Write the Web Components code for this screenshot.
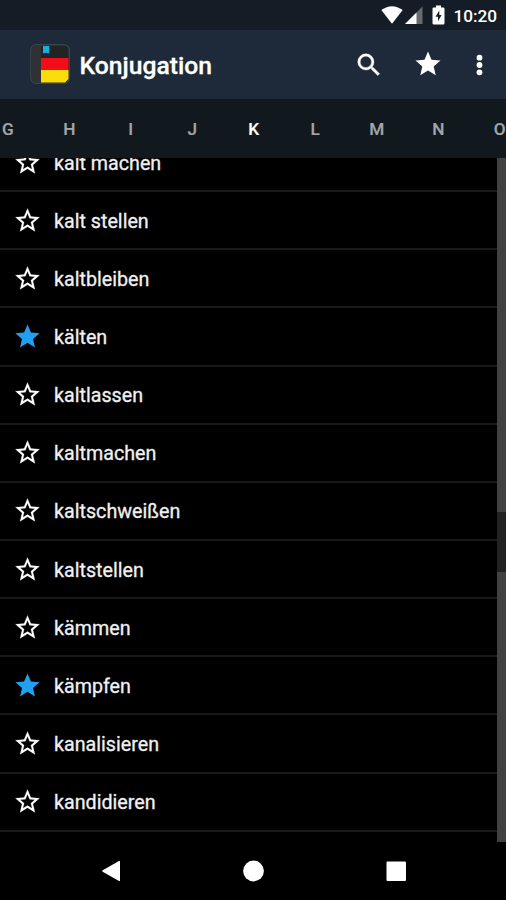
<!DOCTYPE html>
<html lang="de">
<head>
<meta charset="utf-8">
<meta name="viewport" content="width=device-width, initial-scale=1">
<title>Konjugation</title>
<style>
    body {
        margin: 0;
        background: #000;
        color: #fff;
        font-family: Roboto, "Liberation Sans", sans-serif;
        overflow: hidden;
    }
</style>
</head>
<body>
<konjugation-app></konjugation-app>

<script>
class StatusBar extends HTMLElement {
    constructor() {
        super();
        this.attachShadow({ mode: 'open' });
    }

    connectedCallback() {
        this.shadowRoot.innerHTML = `
            <style>
                :host {
                    display: flex;
                    justify-content: flex-end;
                    align-items: center;
                    box-sizing: border-box;
                    height: 30px;
                    padding-right: 9px;
                    background: #141d26;
                }
                svg { display: block; fill: #fff; }
                .battery { margin: 0 8px 0 9px; }
                .time { font-size: 17.2px; font-weight: 500; line-height: 30px; padding-top: 2px; }
            </style>
            <svg width="42" height="20" viewBox="0 0 42 20">
                <path d="M0.3 5 Q11 -2.6 21.7 5 L11 18.8Z"/>
                <path d="M41.5 1.5V19H24Z" opacity=".35"/>
                <path d="M35.5 7.5V19H24Z"/>
            </svg>
            <svg class="battery" width="13" height="20" viewBox="0 0 13 20">
                <path fill-rule="evenodd" d="M4 .5h5v2h2.2q1.3 0 1.3 1.3v14.4q0 1.3-1.3 1.3H1.8Q.5 19.5.5 18.2V3.8Q.5 2.5 1.8 2.5H4ZM7.3 5.5 3.5 11.7H6V16.3L9.6 10H7.3Z"/>
            </svg>
            <span class="time"><slot></slot></span>
        `;
    }
}

class AppBar extends HTMLElement {
    constructor() {
        super();
        this.attachShadow({ mode: 'open' });
    }

    connectedCallback() {
        this.shadowRoot.innerHTML = `
            <style>
                :host {
                    display: flex;
                    align-items: center;
                    box-sizing: border-box;
                    height: 69px;
                    padding: 0 12px 0 30px;
                    background: #1e2a39;
                }
                svg { display: block; fill: #fff; }
                .logo { margin-top: -1px; }
                h1 {
                    flex: 1;
                    margin: 3px 0 0 9.5px;
                    font-size: 24.7px;
                    font-weight: 500;
                    line-height: 30px;
                    -webkit-text-stroke: 0.3px;
                }
                .actions { display: flex; align-items: center; }
                .search { margin-right: 29px; stroke: #fff; stroke-width: .3px; }
                .star { margin: -1px 22px 0 0; }
            </style>
            <svg class="logo" width="40" height="40" viewBox="0 0 40 40">
                <rect x=".7" y=".7" width="38.6" height="38.6" rx="5.5" fill="#222324" stroke="#38434d" stroke-width="1.4"/>
                <path d="M2 6q0-4 4-4h5v36H6q-4 0-4-4z" fill="#303132"/>
                <path d="M11 14h27.5v12H11z" fill="#f20d19"/>
                <path d="M11 26h27.5v9l-3.5 3.5H11z" fill="#fbdc0d"/>
                <path d="M13 2h6.3v7.5l-3.1-.8-3.2.8z" fill="#12b0dc"/>
            </svg>
            <h1><slot></slot></h1>
            <div class="actions">
                <svg class="search" width="30" height="30" viewBox="0 0 24 24"><path d="M15.5 14h-.79l-.28-.27A6.471 6.471 0 0 0 16 9.5 6.5 6.5 0 1 0 9.5 16c1.61 0 3.09-.59 4.23-1.57l.27.28v.79l5 4.99L20.49 19l-4.99-5zm-6 0C7.01 14 5 11.99 5 9.5S7.01 5 9.5 5 14 7.01 14 9.5 11.99 14 9.5 14z"/></svg>
                <svg class="star" width="30" height="30" viewBox="0 0 24 24"><path d="M12 17.27 18.18 21l-1.64-7.03L22 9.24l-7.19-.61L12 2 9.19 8.63 2 9.24l5.46 4.73L5.82 21z"/></svg>
                <svg width="29" height="30" viewBox="0 0 29 30"><circle cx="14.5" cy="7.7" r="2.9"/><circle cx="14.5" cy="15" r="2.9"/><circle cx="14.5" cy="22.3" r="2.9"/></svg>
            </div>
        `;
    }
}

class LetterTabs extends HTMLElement {
    constructor() {
        super();
        this.attachShadow({ mode: 'open' });
    }

    connectedCallback() {
        const active = this.getAttribute('active');
        const tabs = this.getAttribute('letters').split('').map(letter =>
            `<div class="tab${letter === active ? ' active' : ''}">${letter}</div>`
        ).join('');

        this.shadowRoot.innerHTML = `
            <style>
                :host {
                    display: block;
                    height: 59px;
                    overflow: hidden;
                    background: #11191f;
                }
                .strip {
                    display: grid;
                    grid-template-columns: repeat(9, 61.5px);
                    height: 100%;
                    margin-left: -23px;
                }
                .tab {
                    box-sizing: border-box;
                    padding-top: 1px;
                    border-bottom: 6px solid transparent;
                    text-align: center;
                    font-size: 17.2px;
                    font-weight: 500;
                    line-height: 59px;
                    color: #a2a6a9;
                    -webkit-text-stroke: 0.2px;
                }
                .active {
                    color: #fff;
                    border-bottom-color: #219ff1;
                }
            </style>
            <div class="strip">${tabs}</div>
        `;
    }
}

class VerbRow extends HTMLElement {
    constructor() {
        super();
        this.attachShadow({ mode: 'open' });
    }

    connectedCallback() {
        const icon = this.hasAttribute('favorite')
            ? '<path fill="#219ff1" d="M12 17.27 18.18 21l-1.64-7.03L22 9.24l-7.19-.61L12 2 9.19 8.63 2 9.24l5.46 4.73L5.82 21z"/>'
            : '<path fill="#fff" stroke="#fff" stroke-width=".15" d="m22 9.24-7.19-.62L12 2 9.19 8.63 2 9.24l5.46 4.73L5.82 21 12 17.27 18.18 21l-1.63-7.03zM12 15.4l-3.76 2.27 1-4.28-3.32-2.88 4.38-.38L12 6.1l1.71 4.04 4.38.38-3.32 2.88 1 4.28z"/>';

        this.shadowRoot.innerHTML = `
            <style>
                :host {
                    display: flex;
                    align-items: center;
                    flex: none;
                    box-sizing: border-box;
                    height: 58.15px;
                    padding: 2px 0 0 13px;
                    border-bottom: 2px solid #191919;
                }
                svg { display: block; margin: -2px 12px 0 0; }
                span {
                    font-size: 19.7px;
                    line-height: 28px;
                    color: #f0f0f0;
                    padding-top: 1px;
                    -webkit-text-stroke: 0.3px #f0f0f0;
                }
            </style>
            <svg width="29" height="29" viewBox="0 0 24 24">${icon}</svg>
            <span><slot></slot></span>
        `;
    }
}

class VerbList extends HTMLElement {
    constructor() {
        super();
        this.attachShadow({ mode: 'open' });
    }

    connectedCallback() {
        this.shadowRoot.innerHTML = `
            <style>
                :host {
                    display: grid;
                    grid-template-columns: 1fr 9.5px;
                    height: 684px;
                    overflow: hidden;
                }
                /* list is scrolled part way into its first row */
                .rows {
                    display: flex;
                    flex-direction: column;
                    margin-top: -24px;
                }
                .track {
                    box-sizing: border-box;
                    padding-top: 354px;
                    background: #414141;
                }
                .thumb { height: 60px; background: #222; }
            </style>
            <div class="rows"><slot></slot></div>
            <div class="track"><div class="thumb"></div></div>
        `;
    }
}

class NavBar extends HTMLElement {
    constructor() {
        super();
        this.attachShadow({ mode: 'open' });
    }

    connectedCallback() {
        this.shadowRoot.innerHTML = `
            <style>
                :host {
                    display: flex;
                    justify-content: center;
                    align-items: center;
                    gap: 120px;
                    height: 58px;
                    background: #000;
                }
                svg { display: block; fill: #fff; }
            </style>
            <svg width="22" height="22" viewBox="0 0 22 22"><path d="M20 1.5v19q0 1-1 .5L2.7 11.8q-1.2-.8 0-1.6L19 1q1-.5 1 .5z"/></svg>
            <svg width="22" height="22" viewBox="0 0 22 22"><circle cx="11.5" cy="11" r="10.4"/></svg>
            <svg width="22" height="22" viewBox="0 0 22 22"><rect x="2.5" y="1.5" width="19.5" height="19.5" rx="1"/></svg>
        `;
    }
}

class KonjugationApp extends HTMLElement {
    constructor() {
        super();
        this.attachShadow({ mode: 'open' });
    }

    connectedCallback() {
        const verbs = [
            'kalt machen', 'kalt stellen', 'kaltbleiben', 'kälten',
            'kaltlassen', 'kaltmachen', 'kaltschweißen', 'kaltstellen',
            'kämmen', 'kämpfen', 'kanalisieren', 'kandidieren'
        ];
        const favorites = ['kälten', 'kämpfen'];

        this.shadowRoot.innerHTML = `
            <style>
                :host {
                    display: flex;
                    flex-direction: column;
                    width: 506px;
                    height: 900px;
                    overflow: hidden;
                }
            </style>
            <status-bar>10:20</status-bar>
            <app-bar>Konjugation</app-bar>
            <letter-tabs letters="GHIJKLMNO" active="K"></letter-tabs>
            <verb-list>
                ${verbs.map(verb => `<verb-row${favorites.includes(verb) ? ' favorite' : ''}>${verb}</verb-row>`).join('')}
            </verb-list>
            <nav-bar></nav-bar>
        `;
    }
}

customElements.define('status-bar', StatusBar);
customElements.define('app-bar', AppBar);
customElements.define('letter-tabs', LetterTabs);
customElements.define('verb-row', VerbRow);
customElements.define('verb-list', VerbList);
customElements.define('nav-bar', NavBar);
customElements.define('konjugation-app', KonjugationApp);
</script>
</body>
</html>
